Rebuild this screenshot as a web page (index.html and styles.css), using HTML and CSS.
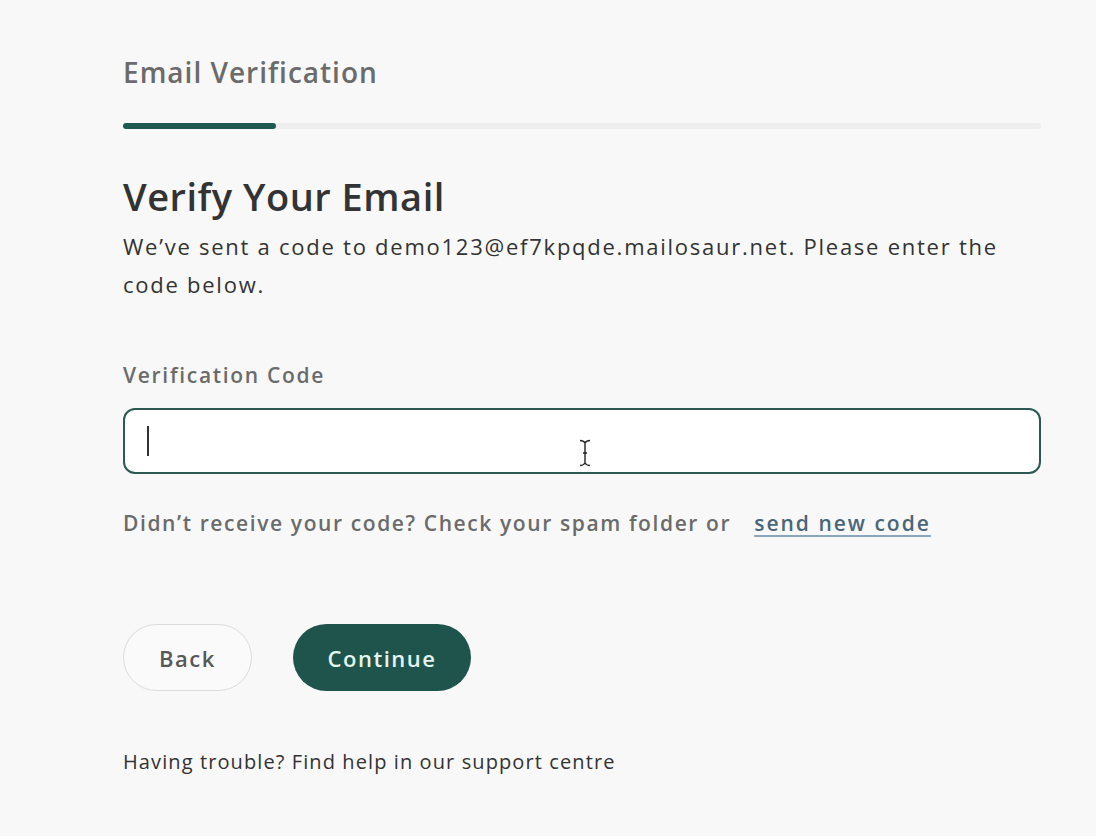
FILE: index.html
```html
<!DOCTYPE html>
<html lang="en">
<head>
    <meta charset="UTF-8">
    <meta name="viewport" content="width=device-width, initial-scale=1.0">
    <title>Email Verification</title>
    <link rel="stylesheet" href="styles.css">
</head>
<body>
    <div class="page">
        <h1 class="step-title">Email Verification</h1>
        <div class="progress">
            <div class="progress-fill"></div>
        </div>

        <h2 class="heading">Verify Your Email</h2>
        <p class="intro">We’ve sent a code to demo123@ef7kpqde.mailosaur.net. Please enter the code below.</p>

        <label class="field-label" for="code">Verification Code</label>
        <div class="field">
            <div class="input">
                <span class="caret"></span>
            </div>
            <svg class="ibeam" width="14" height="28" viewBox="0 0 14 28">
                <path d="M2 1.5c2.4 0 4 .9 5 2.5 1-1.6 2.6-2.5 5-2.5M7 4v20M2 26.5c2.4 0 4-.9 5-2.5 1 1.6 2.6 2.5 5 2.5M5 14h4" fill="none" stroke="#222" stroke-width="1.4"/>
            </svg>
        </div>

        <p class="hint">Didn’t receive your code? Check your spam folder or <a href="#" class="link">send new code</a></p>

        <div class="btns">
            <button class="btn btn-back">Back</button>
            <button class="btn btn-continue">Continue</button>
        </div>

        <p class="help">Having trouble? Find help in our support centre</p>
    </div>
</body>
</html>
```

FILE: styles.css
```css
* {
    margin: 0;
    padding: 0;
    box-sizing: border-box;
}

body {
    font-family: "Open Sans", Lato, sans-serif;
    background: #f8f8f8;
    color: #333;
}

.page {
    width: 918px;
    margin-left: 123px;
    padding-top: 53px;
}

.step-title {
    font-size: 28px;
    font-weight: 600;
    color: #6b6b6b;
    line-height: 38px;
    letter-spacing: 1px;
}

.progress {
    margin-top: 32px;
    height: 6px;
    border-radius: 3px;
    background: #eeeeee;
}

.progress-fill {
    width: 153px;
    height: 100%;
    border-radius: 3px;
    background: #1f5a51;
}

.heading {
    margin-top: 44px;
    font-size: 38px;
    font-weight: 600;
    color: #333;
    line-height: 46px;
    letter-spacing: 0.5px;
}

.intro {
    margin-top: 8px;
    font-size: 22px;
    line-height: 38px;
    color: #333;
    letter-spacing: 1.75px;
}

.field-label {
    display: block;
    margin-top: 58px;
    font-size: 21px;
    font-weight: 600;
    color: #6b6b6b;
    line-height: 28px;
    letter-spacing: 1.7px;
}

.field {
    position: relative;
    margin-top: 19px;
}

.input {
    height: 66px;
    background: #fff;
    border: 2.5px solid #2c5952;
    border-radius: 12px;
    display: flex;
    align-items: center;
    padding-left: 22px;
}

.caret {
    width: 2px;
    height: 30px;
    background: #333;
}

.ibeam {
    position: absolute;
    left: 455px;
    top: 31px;
}

.hint {
    margin-top: 35px;
    font-size: 21px;
    font-weight: 600;
    color: #6b6b6b;
    line-height: 28px;
    letter-spacing: 1.6px;
}

.link {
    margin-left: 16px;
    color: #4a6679;
    letter-spacing: 2px;
    text-decoration: underline;
    text-decoration-color: #8aa6bf;
    text-underline-offset: 4px;
}

.btns {
    display: flex;
    gap: 41px;
    margin-top: 87px;
}

.btn {
    height: 67px;
    border-radius: 34px;
    font-family: inherit;
    font-size: 22px;
    font-weight: 600;
    letter-spacing: 1.5px;
    cursor: pointer;
}

.btn-back {
    width: 129px;
    background: #fafafa;
    border: 1.5px solid #dcdcdc;
    color: #585858;
}

.btn-continue {
    width: 178px;
    background: #1f544c;
    border: none;
    color: #e2f5ef;
}

.help {
    margin-top: 58px;
    font-size: 20px;
    color: #333;
    line-height: 26px;
    letter-spacing: 1.1px;
}
```
